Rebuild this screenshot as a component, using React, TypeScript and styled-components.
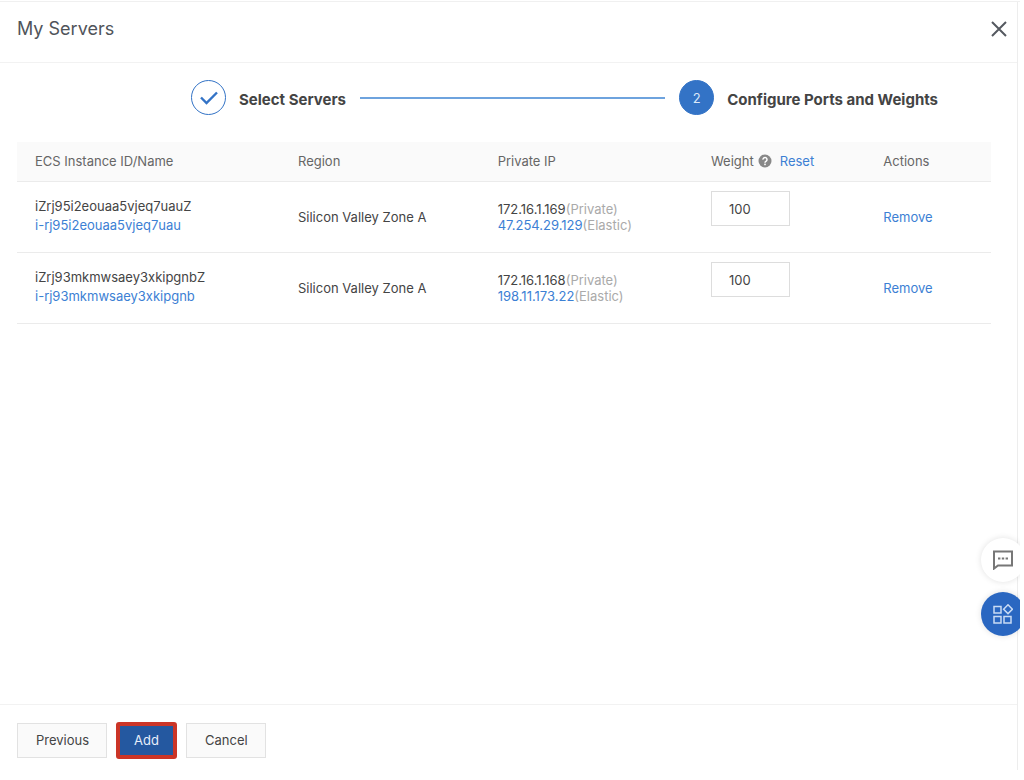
import React, { useState } from "react";
import styled, { createGlobalStyle, css } from "styled-components";

const GlobalStyle = createGlobalStyle`
  * { box-sizing: border-box; }
  body {
    margin: 0;
    background: #fff;
    color: #444;
    font-family: Inter, "Liberation Sans", sans-serif;
    font-size: 13px;
    line-height: 16px;
  }
  button, input { font: inherit; color: inherit; }
`;

const Page = styled.div`
  display: flex;
  min-height: 100vh;
  padding: 1px 4px 10px 0;
`;

const Panel = styled.main`
  position: relative;
  flex: 1;
  min-width: 0;
  display: flex;
  flex-direction: column;
  overflow: hidden;
  border-top: 1px solid #f0f0f0;
  background: linear-gradient(#ededed, #ededed) right 2px top / 1px 100% no-repeat;
  padding-right: 3px;
`;

const Header = styled.header`
  display: flex;
  align-items: center;
  justify-content: space-between;
  height: 61px;
  padding: 0 8px 6px 17px;
  border-bottom: 1px solid #f2f2f2;
`;

const Title = styled.h1`
  margin: 0;
  font-size: 18px;
  line-height: 24px;
  font-weight: 400;
  color: #50545a;
`;

const CloseButton = styled.button`
  display: flex;
  padding: 0;
  border: 0;
  background: none;
  color: #555960;
  cursor: pointer;
`;

const Steps = styled.ol`
  display: flex;
  align-items: center;
  gap: 14px;
  margin: 0;
  padding: 17px 79px 27px 191px;
  list-style: none;
`;

const Step = styled.li`
  display: flex;
  align-items: center;
  gap: 13px;
`;

const StepMark = styled.span<{ $current?: boolean }>`
  display: flex;
  align-items: center;
  justify-content: center;
  width: 35px;
  height: 35px;
  border: 1px solid #3373c6;
  border-radius: 50%;
  background: ${(p) => (p.$current ? "#3373c6" : "#fff")};
  color: ${(p) => (p.$current ? "#dbe8f8" : "#3373c6")};
`;

const StepLabel = styled.span`
  padding-top: 4px;
  font-size: 15px;
  line-height: 20px;
  font-weight: 700;
  white-space: nowrap;
`;

const StepLine = styled.li`
  flex: 1;
  height: 2px;
  background: #6ea3de;
`;

const Body = styled.section`
  flex: 1;
  padding: 0 26px 20px 17px;
`;

const Table = styled.table`
  width: 100%;
  table-layout: fixed;
  border-collapse: separate;
  border-spacing: 0;
`;

const Column = styled.col<{ $share: number }>`
  width: ${(p) => p.$share}%;
`;

const HeadCell = styled.th`
  height: 40px;
  padding: 0 0 1px 18px;
  border-bottom: 1px solid #ebebeb;
  background: #fafafa;
  color: #666;
  font-weight: 400;
  text-align: left;
  white-space: nowrap;
`;

const Cell = styled.td<{ $kind?: "name" | "weight" }>`
  height: 71px;
  padding: 0 0 0 18px;
  border-bottom: 1px solid #ebebeb;
  white-space: nowrap;
  ${(p) => p.$kind === "name" && css`
    padding-bottom: 3px;
    line-height: 19px;
  `}
  ${(p) => p.$kind === "weight" && css`
    padding-top: 9px;
    vertical-align: top;
  `}
`;

const WeightHead = styled.span`
  display: flex;
  align-items: center;
`;

const HelpIcon = styled.svg`
  margin: 0 8px 0 4px;
`;

const Link = styled.a`
  color: #3c80d4;
  text-decoration: none;
`;

const TextButton = styled.button`
  padding: 0;
  border: 0;
  background: none;
  color: #3c80d4;
  cursor: pointer;
`;

const Muted = styled.span`
  color: #aaa;
`;

const WeightInput = styled.input`
  display: block;
  width: 79px;
  height: 35px;
  padding: 0 17px;
  border: 1px solid #ddd;
  border-radius: 0;
  background: #fff;
`;

const Footer = styled.footer`
  display: flex;
  gap: 10px;
  padding: 18px 17px 12px;
  border-top: 1px solid #f2f2f2;
`;

const Button = styled.button<{ $primary?: boolean }>`
  height: 35px;
  padding: 0 17px 1px 18px;
  border: 1px solid #e2e2e2;
  background: #fafafa;
  cursor: pointer;
  ${(p) => p.$primary && css`
    padding: 0 16px 1px;
    border-color: #2458a0;
    background: #2458a0;
    color: #e6eefa;
    outline: 4px solid #cb3527;
    outline-offset: -3px;
    border-radius: 2px;
  `}
`;

const Floating = styled.aside`
  position: absolute;
  right: -5px;
  bottom: 134px;
  display: flex;
  flex-direction: column;
  gap: 10px;
`;

const RoundButton = styled.button<{ $filled?: boolean }>`
  display: flex;
  align-items: center;
  justify-content: center;
  width: 44px;
  height: 44px;
  padding: 0;
  border: 0;
  border-radius: 50%;
  background: ${(p) => (p.$filled ? "#2a67c1" : "#fff")};
  color: ${(p) => (p.$filled ? "#c9dbf4" : "#777")};
  box-shadow: 0 0 6px rgba(0, 0, 0, 0.12);
  cursor: pointer;
`;

const servers = [
  { name: "iZrj95i2eouaa5vjeq7uauZ", id: "i-rj95i2eouaa5vjeq7uau", privateIp: "172.16.1.169", elasticIp: "47.254.29.129" },
  { name: "iZrj93mkmwsaey3xkipgnbZ", id: "i-rj93mkmwsaey3xkipgnb", privateIp: "172.16.1.168", elasticIp: "198.11.173.22" },
];

export default function App() {
  const [weights, setWeights] = useState(servers.map(() => "100"));

  return (
    <Page>
      <GlobalStyle />
      <Panel>
        <Header>
          <Title>My Servers</Title>
          <CloseButton type="button" aria-label="Close">
            <svg width="20" height="20" viewBox="0 0 20 20" fill="none" stroke="currentColor" strokeWidth="2">
              <path d="M3 3l14 14M17 3L3 17" />
            </svg>
          </CloseButton>
        </Header>

        <Steps>
          <Step>
            <StepMark>
              <svg width="18" height="14" viewBox="0 0 18 14" fill="none" stroke="currentColor" strokeWidth="2.4">
                <path d="M1 6.5l5.5 5.5L17 1.5" />
              </svg>
            </StepMark>
            <StepLabel>Select Servers</StepLabel>
          </Step>
          <StepLine aria-hidden="true" />
          <Step aria-current="step">
            <StepMark $current>2</StepMark>
            <StepLabel>Configure Ports and Weights</StepLabel>
          </Step>
        </Steps>

        <Body>
          <Table>
            <colgroup>
              <Column $share={27} />
              <Column $share={20.5} />
              <Column $share={21.9} />
              <Column $share={17.7} />
              <Column $share={12.9} />
            </colgroup>
            <thead>
              <tr>
                <HeadCell scope="col">ECS Instance ID/Name</HeadCell>
                <HeadCell scope="col">Region</HeadCell>
                <HeadCell scope="col">Private IP</HeadCell>
                <HeadCell scope="col">
                  <WeightHead>
                    Weight
                    <HelpIcon width="14" height="14" viewBox="0 0 14 14" aria-hidden="true">
                      <circle cx="7" cy="7" r="6.5" fill="#888" />
                      <path d="M5 5.6a2 2 0 1 1 3.2 1.5C7.4 7.6 7 7.9 7 8.7" fill="none" stroke="#fff" strokeWidth="1.5" />
                      <rect x="6.2" y="9.6" width="1.6" height="1.6" fill="#fff" />
                    </HelpIcon>
                    <TextButton type="button" onClick={() => setWeights(servers.map(() => "100"))}>Reset</TextButton>
                  </WeightHead>
                </HeadCell>
                <HeadCell scope="col">Actions</HeadCell>
              </tr>
            </thead>
            <tbody>
              {servers.map((server, row) => (
                <tr key={server.id}>
                  <Cell $kind="name">
                    {server.name}<br />
                    <Link href="#instance">{server.id}</Link>
                  </Cell>
                  <Cell>Silicon Valley Zone A</Cell>
                  <Cell>
                    {server.privateIp}<Muted>(Private)</Muted><br />
                    <Link href="#address">{server.elasticIp}</Link><Muted>(Elastic)</Muted>
                  </Cell>
                  <Cell $kind="weight">
                    <WeightInput
                      type="text"
                      inputMode="numeric"
                      aria-label={`Weight of ${server.name}`}
                      value={weights[row]}
                      onChange={(e) => setWeights(weights.map((w, i) => (i === row ? e.target.value : w)))}
                    />
                  </Cell>
                  <Cell><TextButton type="button">Remove</TextButton></Cell>
                </tr>
              ))}
            </tbody>
          </Table>
        </Body>

        <Footer>
          <Button type="button">Previous</Button>
          <Button type="button" $primary>Add</Button>
          <Button type="button">Cancel</Button>
        </Footer>

        <Floating>
          <RoundButton type="button" aria-label="Feedback">
            <svg width="20" height="20" viewBox="0 0 20 20" fill="none" stroke="currentColor" strokeWidth="2">
              <path d="M1 1.5h18v14H5L1 18.6z" />
              <path d="M5 8.5h2.4M8.8 8.5h2.4M12.6 8.5H15" />
            </svg>
          </RoundButton>
          <RoundButton type="button" $filled aria-label="Products">
            <svg width="20" height="20" viewBox="0 0 20 20" fill="none" stroke="currentColor" strokeWidth="1.5">
              <rect x="1" y="2.5" width="7" height="6.5" />
              <rect x="1" y="12.5" width="7" height="6.5" />
              <rect x="11" y="12.5" width="7" height="6.5" />
              <path d="M15 .8l4.4 4.4L15 9.6l-4.4-4.4z" />
            </svg>
          </RoundButton>
        </Floating>
      </Panel>
    </Page>
  );
}
